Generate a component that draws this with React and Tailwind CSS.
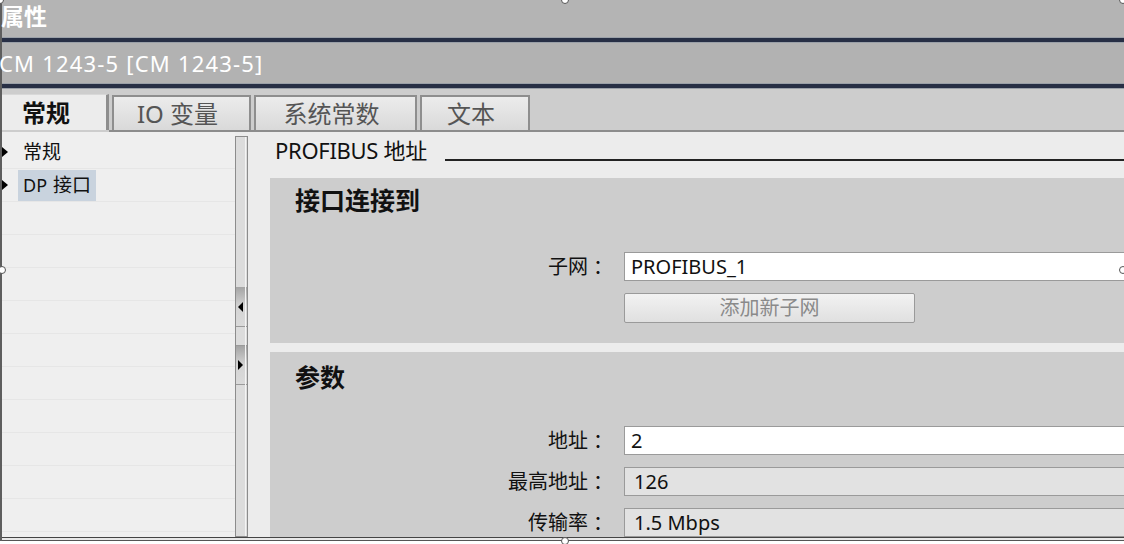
import React from 'react';

const FONT = "font-['Noto_Sans','Noto_Sans_CJK_SC',sans-serif]";

function Band() {
  return (
    <div className="h-[6px] shrink-0 flex flex-col">
      <div className="h-px bg-[#9aa0a8]" />
      <div className="flex-1 bg-[#272f45]" />
      <div className="h-px bg-[#9aa0a8]" />
    </div>
  );
}

function Tab({ label, width, active }) {
  if (active) {
    return (
      <div
        className="h-full flex items-center justify-center pr-[16px] bg-[#ececec] border-r-[3px] border-[#8e8e8e] border-t border-t-[#d8d8d8] text-[24px] font-bold text-[#111]"
        style={{ width }}
      >
        {label}
      </div>
    );
  }
  return (
    <div
      className="h-[35px] self-end flex items-center justify-center pr-[8px] bg-gradient-to-b from-[#ececec] to-[#d9d9d9] border-2 border-b-0 border-[#8e8e8e] text-[24px] text-[#555]"
      style={{ width }}
    >
      {label}
    </div>
  );
}

function TreeRow({ label, selected, bullet }) {
  return (
    <div className="h-[33px] shrink-0 border-b border-[#e6e6e6] flex items-center relative">
      {bullet && (
        <span className="absolute left-0 top-1/2 -translate-y-1/2 w-0 h-0 border-y-[5px] border-y-transparent border-l-[6px] border-l-black" />
      )}
      {label && (
        <span
          className={
            'ml-[16px] px-[5px] h-[31px] flex items-center text-[19px] text-[#111] ' +
            (selected ? 'bg-[#c9d3de]' : '')
          }
        >
          {label}
        </span>
      )}
    </div>
  );
}

function Field({ label, value, editable }) {
  return (
    <div className="flex items-center shrink-0">
      <div className="w-[343px] flex justify-end items-center text-[20px] leading-[26px] text-[#111]">
        <span>{label}</span>
        <span className="ml-[5px] w-[20px]">：</span>
      </div>
      <div
        className={
          'ml-[11px] flex-1 h-[29px] border border-[#9a9a9a] border-r-0 flex items-center text-[20px] leading-[24px] text-[#111] ' +
          (editable ? 'bg-white pl-[6px]' : 'bg-[#e2e2e2] pl-[9px]')
        }
      >
        {value}
      </div>
    </div>
  );
}

function Handle({ className }) {
  return <span className={'absolute w-[8px] h-[8px] rounded-full bg-white border border-[#555] ' + className} />;
}

export default function App() {
  return (
    <div className={'relative w-[1124px] h-[544px] overflow-hidden bg-white ' + FONT}>
      <div className="h-[541px] flex flex-col border-l-2 border-[#5e5e5e]">
        {/* title */}
        <div className="h-[37px] shrink-0 bg-[#b4b4b4] flex items-center">
          <span className="text-[23px] font-bold text-white leading-none -ml-[1px] -mt-[4px]">属性</span>
        </div>
        <Band />
        <div className="h-[40px] shrink-0 bg-[#b2b2b2] flex items-center">
          <span className="text-[22px] tracking-[1.2px] text-white leading-none -ml-[3px]">CM 1243-5 [CM 1243-5]</span>
        </div>
        <Band />

        {/* tabs */}
        <div className="h-[43px] shrink-0 bg-[#cdcdcd] flex flex-col">
          <div className="flex-1 flex items-end gap-[3px]">
            <div className="h-[36px] flex">
              <Tab label="常规" width={107} active />
            </div>
            <Tab label="IO 变量" width={139} />
            <Tab label="系统常数" width={163} />
            <Tab label="文本" width={110} />
          </div>
          <div className="h-[2px] bg-[#8c8c8c] ml-[107px]" />
        </div>

        {/* body */}
        <div className="flex-1 flex bg-[#ececec] min-h-0">
          {/* tree */}
          <div className="w-[233px] shrink-0 pt-[4px] bg-[#efefef] overflow-hidden flex flex-col">
            <TreeRow label="常规" bullet />
            <TreeRow label={<><span className="text-[18px]">DP</span><span className="ml-[6px]">接口</span></>} selected bullet />
            {Array.from({ length: 10 }).map((_, i) => (
              <TreeRow key={i} />
            ))}
          </div>

          {/* splitter */}
          <div className="w-[13px] shrink-0 mt-[4px] border border-[#8c8c8c] bg-[#dcdcdc] flex flex-col relative">
            <div className="absolute right-[1px] top-0 bottom-0 w-px bg-[#f4f4f4]" />
            <div className="h-[150px] shrink-0" />
            <div className="h-[40px] shrink-0 border-b border-[#9a9a9a] bg-gradient-to-b from-[#a4a4a4] via-[#d4d4d4] to-[#dadada] flex items-center justify-center pr-[2px]">
              <span className="w-0 h-0 border-y-[5px] border-y-transparent border-r-[5px] border-r-black" />
            </div>
            <div className="h-[19px] shrink-0 border-b border-[#9a9a9a]" />
            <div className="h-[39px] shrink-0 border-b border-[#9a9a9a] bg-gradient-to-b from-[#a4a4a4] via-[#d4d4d4] to-[#dadada] flex items-center justify-center pr-[2px]">
              <span className="w-0 h-0 border-y-[5px] border-y-transparent border-l-[5px] border-l-black" />
            </div>
          </div>

          {/* right content */}
          <div className="flex-1 flex flex-col pl-[22px] overflow-hidden">
            <div className="h-[46px] shrink-0 flex items-start">
              <span className="ml-[5px] mt-[4px] leading-[28px] text-[22px] text-[#111] tracking-[-0.3px]">PROFIBUS 地址</span>
              <div className="flex-1 ml-[18px] mt-[27px] h-[2px] bg-[#222]" />
            </div>

            <div className="h-[165px] shrink-0 bg-[#cdcdcd] flex flex-col">
              <div className="pl-[25px] pt-[4px] text-[25px] leading-[36px] font-bold text-[#111]">接口连接到</div>
              <div className="mt-[34px]">
                <Field label="子网" value="PROFIBUS_1" editable />
              </div>
              <div className="mt-[12px] ml-[354px] w-[291px] h-[30px] shrink-0 rounded-[2px] border border-[#9a9a9a] bg-gradient-to-b from-[#f2f2f2] to-[#e0e0e0] flex items-center justify-center text-[20px] text-[#8a8a8a]">
                添加新子网
              </div>
            </div>

            <div className="h-[9px] shrink-0" />

            <div className="flex-1 bg-[#cdcdcd] flex flex-col">
              <div className="pl-[25px] pt-[7px] text-[25px] leading-[36px] font-bold text-[#111]">参数</div>
              <div className="mt-[31px] flex flex-col gap-[12px]">
                <Field label="地址" value="2" editable />
                <Field label="最高地址" value="126" />
                <Field label="传输率" value="1.5 Mbps" />
              </div>
            </div>
          </div>
        </div>

        {/* bottom frame */}
        <div className="h-[4px] shrink-0 flex flex-col">
          <div className="h-px bg-[#444]" />
          <div className="h-[2px] bg-[#e8e8e8]" />
          <div className="h-px bg-[#555]" />
        </div>
      </div>

      {/* selection handles */}
      <Handle className="left-[561px] -top-[4px]" />
      <Handle className="-left-[4px] -top-[4px]" />
      <Handle className="left-[1119px] -top-[4px]" />
      <Handle className="-left-[2px] top-[266px]" />
      <Handle className="left-[1119px] top-[266px]" />
      <Handle className="left-[561px] top-[537px]" />
    </div>
  );
}
